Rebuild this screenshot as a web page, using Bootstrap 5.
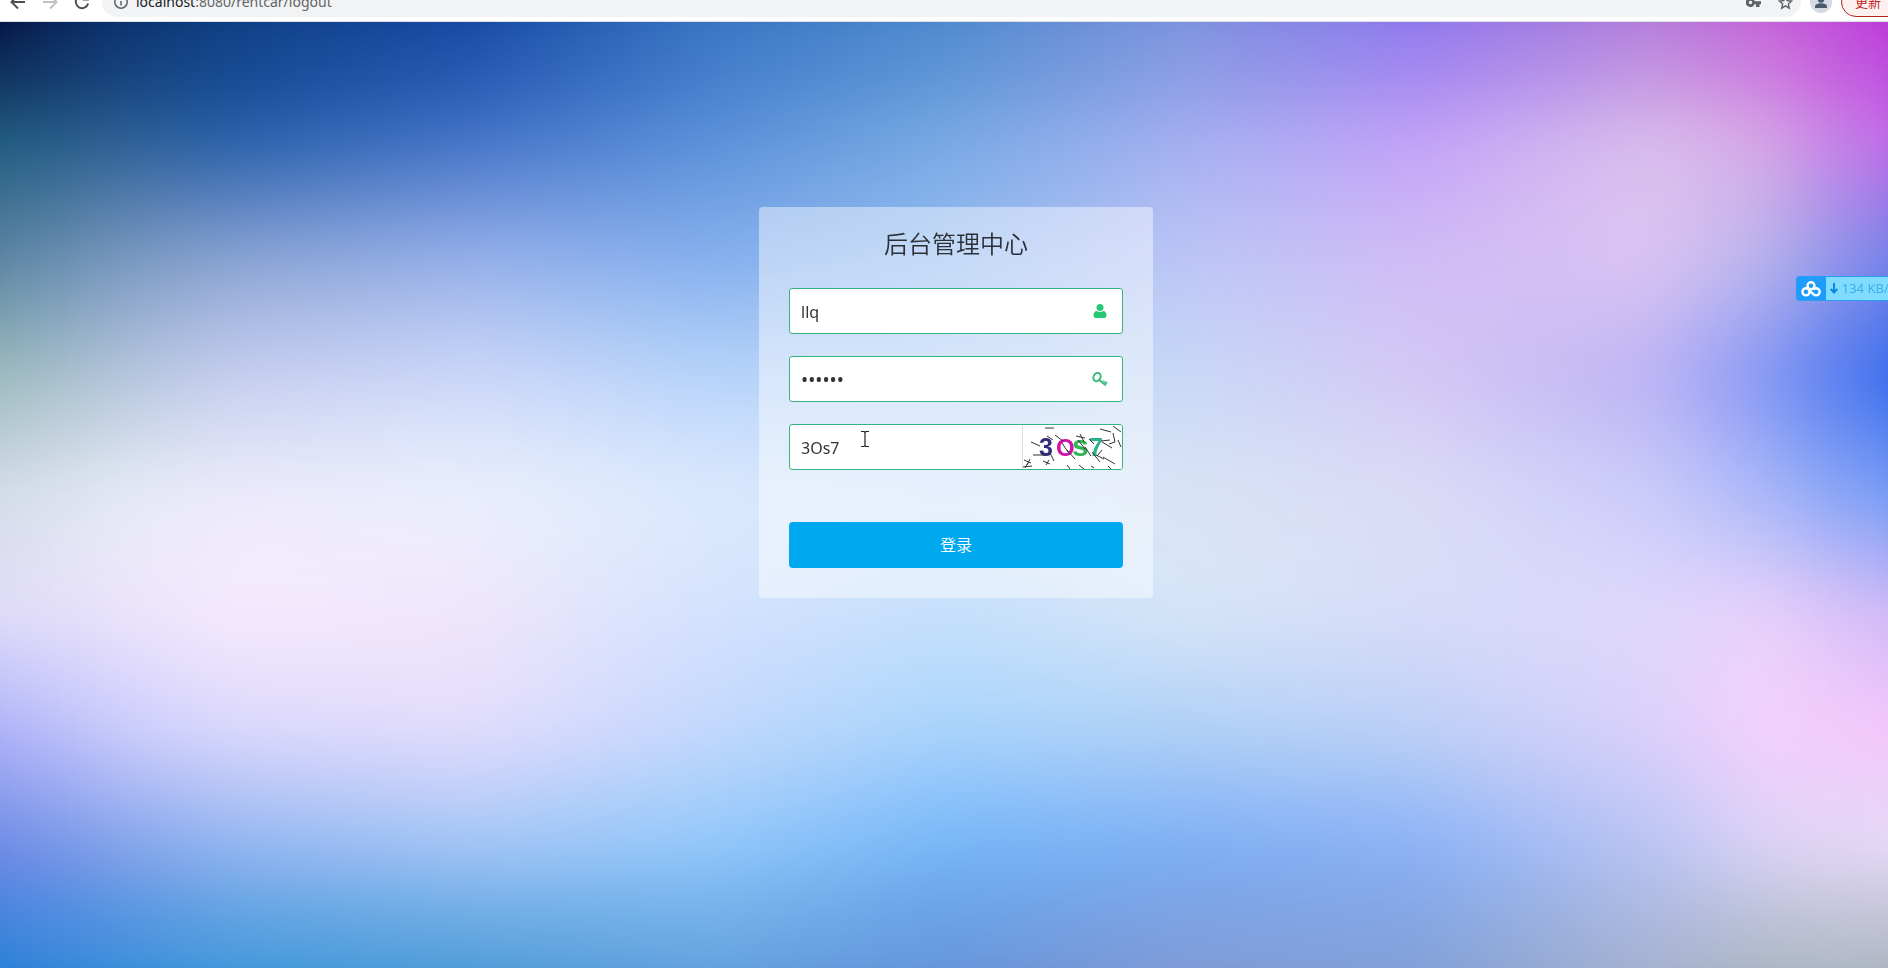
<!DOCTYPE html>
<html lang="zh-CN">
<head>
<meta charset="utf-8">
<meta name="viewport" content="width=device-width, initial-scale=1">
<title>后台管理中心</title>
<link href="https://cdn.jsdelivr.net/npm/bootstrap@5.3.0/dist/css/bootstrap.min.css" rel="stylesheet">
<style>
body{font-family:"Noto Sans","Noto Sans CJK SC",sans-serif;color:#2b2f38}
.toolbar{height:22px;padding:0 0 4px 6px;border-bottom:1px solid #dcdfe3;background:#fff;overflow:hidden}
.tool{height:30px;width:24px;color:#5f6368}
.tool svg,.omni svg{display:block}
.omni{height:30px;border-radius:15px;background:#f1f3f4;color:#5f6368;font:14px/30px "Noto Sans",sans-serif}
.omni-url{outline:0;white-space:nowrap}
.omni-url b{font-weight:400;color:#202124}
.update{height:30px;width:80px;margin-right:-33px;border:1px solid #b3261e;border-radius:15px;background:#fdf1f0;color:#c5221f;font:13px/28px "Noto Sans CJK SC",sans-serif;padding:0 0 0 13px;text-align:left}
.stage{isolation:isolate;overflow:hidden;background:#9cc4f4}
/* colour mesh: each strip fades in over the one above it, then the whole is softened */
.sky{position:absolute;inset:0;z-index:-1}
.sky i,.sky::after{position:absolute;inset:0}
.sky i{background:linear-gradient(90deg,var(--c));-webkit-mask-image:linear-gradient(transparent var(--a),#000 var(--b));mask-image:linear-gradient(transparent var(--a),#000 var(--b))}
.sky::after{content:"";-webkit-backdrop-filter:blur(30px);backdrop-filter:blur(30px)}
.login{width:394px;margin-top:185px;padding:0 30px 30px;border-radius:4px;background:rgba(255,255,255,.44)}
.login h1{font-size:24px;line-height:33px;font-weight:350;padding:20px 0 28px;margin:0}
.field{height:46px;margin-bottom:22px;border:1px solid #36b37e;border-radius:3px;background:#fff;overflow:hidden}
.field input,.field input:focus{height:44px;border:0;padding:2px 11px 0;font-size:16px;color:#333;background:none;box-shadow:none}
.field input[type=password]{font-size:19px}
.field label{width:48px;color:#26c775}
.field label svg{margin-left:-2px}
.captcha{width:100px;border:0;border-left:1px solid #ddd;padding:0;background:#fff}
.submit{height:46px;margin-top:52px;border:0;border-radius:4px;background:#00a8f0;color:#fff;font-size:16px;font-weight:350}
.submit:hover{background:#0098dc;color:#fff}
.speed{position:absolute;right:-8px;top:254px;height:25px;border:1px solid #2c9cf4;border-radius:3px 0 0 3px;background:#80dcff;color:#3caeee;font-size:13px;line-height:23px;white-space:nowrap}
.speed-logo{width:29px;background:#1f9cfb}
.pointer{position:absolute;left:860px;top:408px;pointer-events:none}
</style>
</head>
<body class="min-vh-100 d-flex flex-column overflow-hidden">
<header class="toolbar d-flex align-items-end">
  <button class="tool btn p-0 border-0 me-2 d-flex align-items-center justify-content-center" aria-label="后退"><svg width="16" height="16" viewBox="0 0 16 16" fill="none" stroke="#4d5156" stroke-width="2"><path d="M15 8H2M8 1.500 1.500 8 8 14.500"/></svg></button>
  <button class="tool btn p-0 border-0 me-2 d-flex align-items-center justify-content-center" aria-label="前进"><svg width="16" height="16" viewBox="0 0 16 16" fill="none" stroke="#bdc1c6" stroke-width="2"><path d="M1 8h13M8 1.500 14.500 8 8 14.500"/></svg></button>
  <button class="tool btn p-0 border-0 me-2 d-flex align-items-center justify-content-center" aria-label="刷新"><svg width="16" height="16" viewBox="0 0 16 16" fill="none" stroke="#4d5156" stroke-width="2"><path d="M13.500 4.500A6.300 6.300 0 1 0 14.200 9.500"/><path d="M15 0v6.500H8.500z" fill="#4d5156" stroke="none"/></svg></button>
  <div class="omni flex-grow-1 d-flex align-items-center ps-2 pe-1">
    <svg class="mx-1 me-2" width="14" height="14" viewBox="0 0 14 14" fill="none" stroke="#5f6368" stroke-width="1.500"><circle cx="7" cy="7" r="6.200"/><path d="M7 6v4.500M7 3.300v1.600"/></svg>
    <div class="omni-url flex-grow-1" role="textbox" aria-label="地址"><b>localhost</b>:8080/rentcar/logout</div>
    <button class="tool btn p-0 border-0 me-2 d-flex align-items-center justify-content-center" aria-label="密码"><svg width="15" height="9" viewBox="0 0 15 9" fill="#5f6368"><path fill-rule="evenodd" d="M4.500 0a4.500 4.500 0 1 0 4 6.200H10V9h3.500V6.200H15v-3H8.700A4.500 4.500 0 0 0 4.500 0zm0 2.800a1.700 1.700 0 1 1 0 3.400 1.700 1.700 0 0 1 0-3.400z"/></svg></button>
    <button class="tool btn p-0 border-0 d-flex align-items-center justify-content-center" aria-label="收藏"><svg width="15" height="15" viewBox="0 0 15 15" fill="none" stroke="#5f6368" stroke-width="1.400"><path d="m7.500 1.500 1.700 4.100 4.400.4-3.300 2.900 1 4.300-3.800-2.300-3.800 2.300 1-4.300L1.400 6l4.400-.4z"/></svg></button>
  </div>
  <button class="tool btn p-0 border-0 ms-2 me-2 d-flex align-items-center justify-content-center" aria-label="用户"><svg width="22" height="22" viewBox="0 0 22 22"><circle cx="11" cy="11" r="11" fill="#d5dbe3"/><circle cx="11" cy="8.500" r="3.200" fill="#4a5a70"/><path d="M5 17v-1.500c0-2 3-3.200 6-3.200s6 1.200 6 3.200V17z" fill="#4a5a70"/></svg></button>
  <button class="update flex-shrink-0">更新</button>
</header>

<main class="stage position-relative flex-grow-1 d-flex justify-content-center align-items-start ps-4">
  <div class="sky" aria-hidden="true">
    <i style="--c:#031040,#052c68,#0a3a80 12.5%,#1244a0,#3470c0,#4a86cc,#7890dc,#8a74ec,#b078d8 87.5%,#c45cd8,#bc38d8;--a:-2%;--b:-1%"></i>
    <i style="--c:#205c80,#2c6094,#2860ac 12.5%,#4474c8,#5c90da,#78aae4,#a4b0f0,#c4a2f8,#dcc0ec 87.5%,#d8a8e6,#c068e8;--a:0%;--b:12.5%"></i>
    <i style="--c:#5a84a0,#7a98c0,#8ca4d4 12.5%,#98b0ea,#84b0ee,#94bcf0,#bcc6f6,#d0bcf6,#dcc6f2 87.5%,#b8b4ec,#7080e8;--a:12.5%;--b:25%"></i>
    <i style="--c:#9cbabc,#b4c6dc,#c8d0f0 12.5%,#ccd8f8,#b8d4fa,#b8d4f8,#c8daf6,#d4c8f4,#bcb2f4 87.5%,#8094f4,#346aec;--a:25%;--b:37.5%"></i>
    <i style="--c:#d4dce8,#e8ecf6,#eeecfc 12.5%,#ecf0fd,#dceafd,#d8e6fc,#dae4f6,#dcdcf6,#ccccfa 87.5%,#a8b8f8,#749af4;--a:37.5%;--b:50%"></i>
    <i style="--c:#e0dcf8,#ece4fc,#f6eafd 12.5%,#f0e6fc,#d4e2fd,#c6e0fb,#d6e6f8,#d8dcf8,#e0d8fb 87.5%,#ead2fa,#d0b8f6;--a:50%;--b:62.5%"></i>
    <i style="--c:#acb0f8,#ccccfc,#dcd8fc 12.5%,#e4dcfc,#c4d8fc,#a8d4fc,#b0d0f6,#bcd0f6,#dcd0fa 87.5%,#f6d0fc,#f4c6fa;--a:62.5%;--b:75%"></i>
    <i style="--c:#6c88e4,#80a0ea,#90b4f0 12.5%,#a0c4f6,#90c8fa,#74b4f8,#7aaef6,#88b0f6,#b8c4f4 87.5%,#dcd4f6,#e4daf6;--a:75%;--b:87.5%"></i>
    <i style="--c:#2880d8,#368cd8,#3c96d8 12.5%,#4899d6,#609edc,#6492d8,#8099d3,#829ed4,#a4b0cc 87.5%,#a8b4c0,#acb4c0;--a:87.5%;--b:100%"></i>
  </div>

  <form class="login" onsubmit="return false">
    <h1 class="text-center">后台管理中心</h1>
    <div class="field d-flex">
      <input id="user" class="form-control" type="text" value="llq" aria-label="用户名">
      <label for="user" class="d-flex align-items-center justify-content-center"><svg width="14" height="14" viewBox="0 0 14 14" fill="currentColor"><circle cx="7" cy="3.500" r="3.500"/><path d="M.5 11.500C.5 8.500 2 7 3.600 7c2 1.300 4.800 1.300 6.800 0 1.600 0 3.100 1.500 3.100 4.500 0 1.500-.8 2.500-2.200 2.500H2.700C1.300 14 .5 13 .5 11.500z"/></svg></label>
    </div>
    <div class="field d-flex">
      <input id="pass" class="form-control" type="password" value="123456" aria-label="密码">
      <label for="pass" class="d-flex align-items-center justify-content-center"><svg width="16" height="15" viewBox="0 0 16 15" fill="none" stroke="#36bd7c"><ellipse cx="5" cy="5" rx="3.400" ry="4.300" stroke-width="2" transform="rotate(28 5 5)"/><path d="m6.500 7.500 7.500 6" stroke-width="1.800"/><path d="m12.400 9.300 2.800 2M10.800 6.500" stroke-width="1.600"/><path d="m10 10.500 1.600-2M12.400 12.400l1.400-2" stroke-width="1.200"/></svg></label>
    </div>
    <div class="field d-flex mb-0">
      <input id="code" class="form-control" type="text" value="3Os7" aria-label="验证码">
      <button type="button" class="captcha flex-shrink-0" aria-label="换一张">
        <svg class="d-block" width="99" height="44" viewBox="1 0 99 44" font-family="Liberation Sans, sans-serif" font-weight="700">
          <text x="17" y="31" font-size="25" fill="#322c7c">3</text>
          <text x="34" y="31" font-size="24" fill="#d010a8">O</text>
          <text x="50" y="31" font-size="30" fill="#2fb457">s</text>
          <text x="67" y="31" font-size="25" fill="#2bb08c">7</text>
          <path d="M23 3h9M9 17l9 4M11 30h12M25 11l6 4M28 28l4 8M33 10l8 6M2 35l7 3M6 38l-3 5M1 42l9-1M8 34l-3 6M21 36l7 3M27 35l-3 5M45 25l8 9M40 18l6 9M56 15l7 9M58 9l4 8M54 11l9 2M63 22l6 9M67 14l5 5M70 27l8 10M74 30l8 4M81 32l12 7M75 31l5-6M80 17l10 6M79 16l9-1M78 4l11 3M91 8l2 9M87 19l6-2M91 1l8 6M96 15l3 7M45 40l3 4M57 40l5 4M69 41l3 2M86 41l3 3" fill="none" stroke="#333" stroke-width="1"/>
        </svg>
      </button>
    </div>
    <button class="submit btn w-100 p-0">登录</button>
  </form>

  <div class="speed d-flex">
    <span class="speed-logo d-flex align-items-center justify-content-center"><svg width="20" height="16" viewBox="0 0 20 16" fill="none" stroke="#fff" stroke-width="2.400"><circle cx="10" cy="4.800" r="3.500"/><circle cx="5" cy="10.800" r="3.600"/><path d="m7.500 8.300 5 5a3.600 3.600 0 1 0 0-5"/></svg></span>
    <svg class="align-self-center mx-1" width="8" height="11" viewBox="0 0 8 11" fill="none" stroke="#0c86e0" stroke-width="2"><path d="M4 0v9M.7 6 4 9.500 7.300 6"/></svg>
    <span>134 KB/s</span>
  </div>
  <svg class="pointer" width="10" height="18" viewBox="0 0 10 18" fill="none" stroke="#222" stroke-width="1.200"><path d="M1 1.500h3l1 1 1-1h3M5 2v14M1 16.500h3l1-1 1 1h3"/></svg>
</main>
<script src="https://cdn.jsdelivr.net/npm/bootstrap@5.3.0/dist/js/bootstrap.bundle.min.js"></script>
</body>
</html>
